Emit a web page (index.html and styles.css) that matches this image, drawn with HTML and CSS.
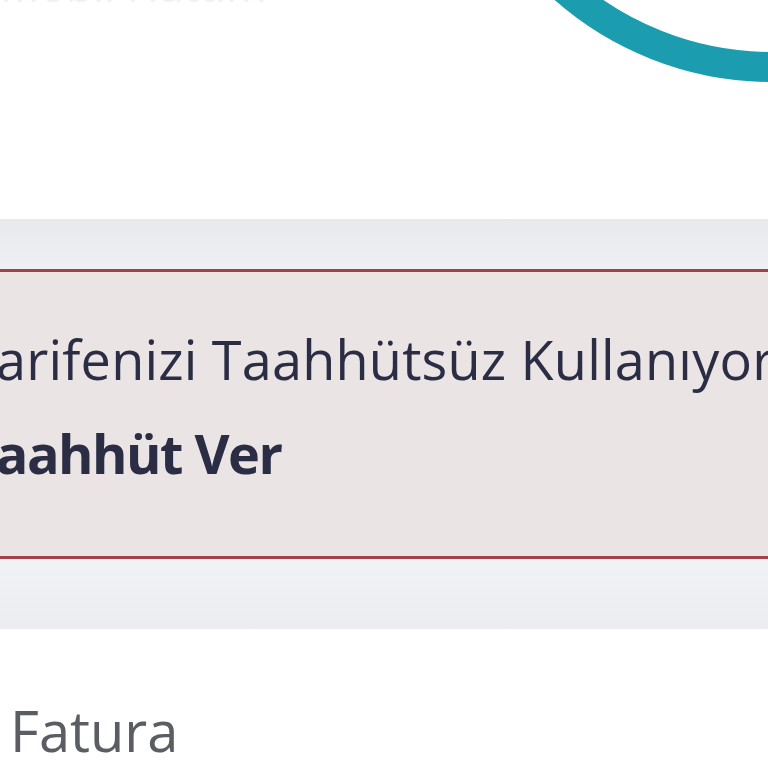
FILE: index.html
```html
<!DOCTYPE html>
<html lang="tr">
  <head>
    <meta charset="UTF-8" />
    <meta name="viewport" content="width=device-width, initial-scale=1.0" />
    <title>Tarife</title>
    <link rel="stylesheet" href="styles.css">
  </head>

  <body>
    <div class="page">
      <!-- ust alan -->
      <div class="top">
        <div class="top-title">Mobil Hattım</div>
        <svg class="ring" width="768" height="220" viewBox="0 0 768 220">
          <circle cx="772" cy="-247" r="314" fill="none" stroke="#1b9daf" stroke-width="30" />
        </svg>
      </div>

      <div class="band band-top"></div>

      <!-- uyari kutusu -->
      <div class="notice">
        <p class="notice-text">Tarifenizi Taahhütsüz Kullanıyorsunuz</p>
        <p class="notice-link">Taahhüt Ver</p>
      </div>

      <div class="band band-bottom"></div>

      <!-- fatura -->
      <div class="section">
        <h3 class="section-title">Fatura</h3>
      </div>
    </div>
  </body>
</html>
```

FILE: styles.css
```css
* {
  margin: 0px;
  padding: 0px;
  box-sizing: border-box;
}

body {
  width: 768px;
  height: 768px;
  overflow: hidden;
  background-color: #fff;
  font-family: "Open Sans", "Noto Sans", sans-serif;
}

.page {
  width: 768px;
}

.top {
  height: 219px;
  position: relative;
  overflow: hidden;
}

.top-title {
  margin-top: -40px;
  margin-left: 0px;
  font-size: 44px;
  line-height: 50px;
  color: #f1f1f1;
}

/* dekoratif halka */
.ring {
  position: absolute;
  left: 0;
  top: 0;
}

.band {
  background-color: #eef0f3;
}

.band-top {
  height: 50px;
  background: linear-gradient(#e8e9eb, #eff0f4);
}

.band-bottom {
  height: 70px;
  background: linear-gradient(#f1f2f5, #ecedf0);
}

.notice {
  height: 290px;
  background-color: #ebe4e4;
  border-top: 3px solid #a3404a;
  border-bottom: 3px solid #a3404a;
  padding-top: 52px;
  margin-left: -34px;
  white-space: nowrap;
  color: #2b2d45;
}

.notice-text {
  font-size: 54px;
  line-height: 70px;
  font-weight: 400;
  letter-spacing: 0.2px;
}

.notice-link {
  margin-top: 24px;
  font-size: 54px;
  line-height: 70px;
  font-weight: 700;
  letter-spacing: -1.5px;
}

.section {
  padding-top: 66px;
  padding-left: 10px;
}

.section-title {
  font-size: 56px;
  line-height: 70px;
  font-weight: 400;
  color: #5a5d62;
}
```
